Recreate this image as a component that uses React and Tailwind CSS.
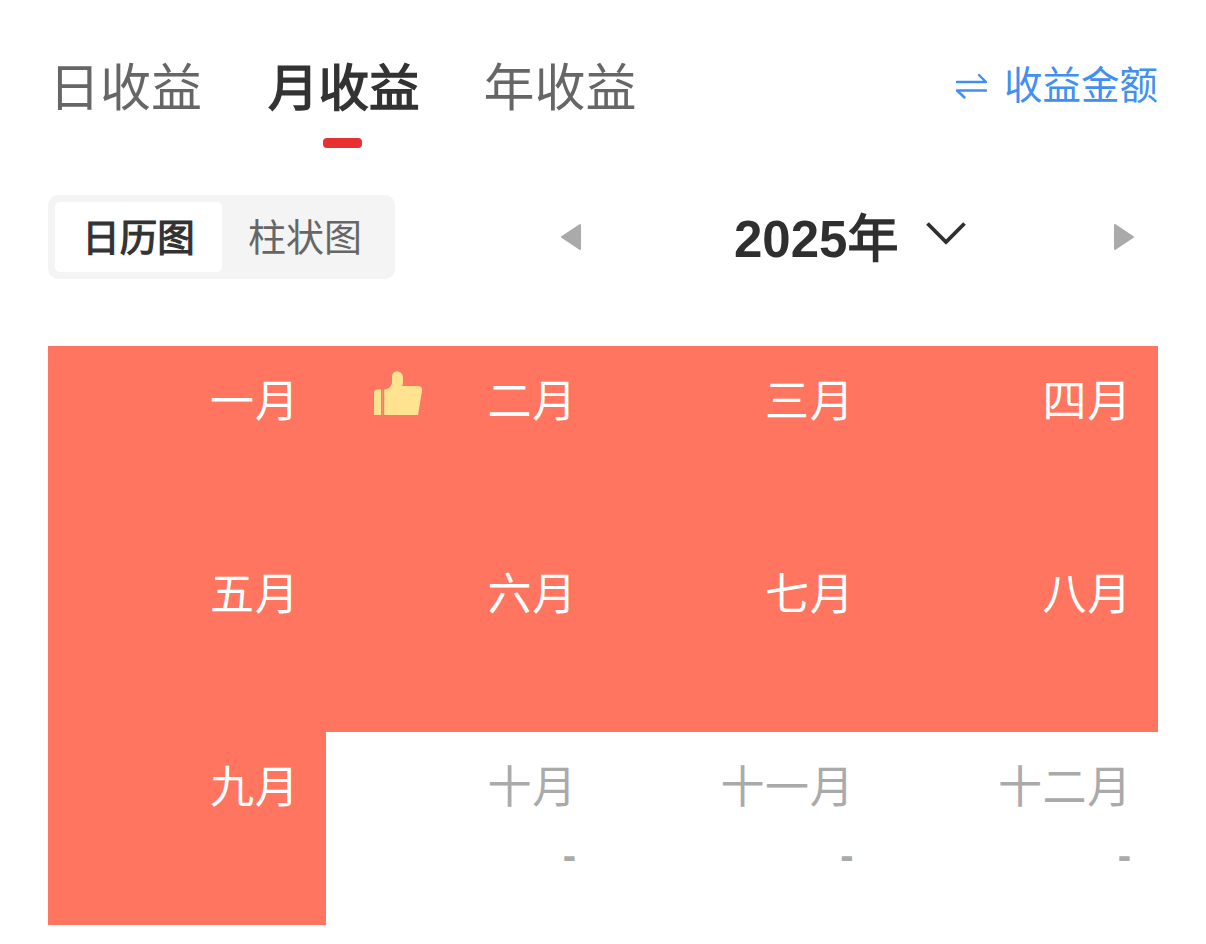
import { useState } from "react";

const tabs = [
  { id: "day", label: "日收益", spacing: "ml-[1px]" },
  { id: "month", label: "月收益", spacing: "ml-[66px]" },
  { id: "year", label: "年收益", spacing: "ml-[64px]" },
];

const months = [
  { label: "一月", filled: true },
  { label: "二月", filled: true, best: true },
  { label: "三月", filled: true },
  { label: "四月", filled: true },
  { label: "五月", filled: true },
  { label: "六月", filled: true },
  { label: "七月", filled: true },
  { label: "八月", filled: true },
  { label: "九月", filled: true },
  { label: "十月", value: "-" },
  { label: "十一月", value: "-" },
  { label: "十二月", value: "-" },
];

function SwapIcon() {
  return (
    <svg width="34" height="30" viewBox="0 0 34 30" fill="none" stroke="#418ff0" strokeWidth="2.4" strokeLinecap="round" strokeLinejoin="round">
      <path d="M2 11H31L24 4" />
      <path d="M31 19.5H2L9.5 26.5" />
    </svg>
  );
}

function ThumbIcon() {
  return (
    <svg width="48" height="44" viewBox="0 0 48 44" fill="#ffe391">
      <path d="M0 44V22Q0 18.5 4 18.5H7V44Z" />
      <path d="M8 18.5H9V44H8Z" opacity=".3" />
      <path d="M10.2 44V18.5C15 18 18 15 18 11V6C18 2.5 20 .5 23 .5C26.5 .5 29 3 29 7V12Q29 14.5 27.5 15H44Q48.5 15 48 20L44 44Z" />
    </svg>
  );
}

function Triangle({ className = "" }) {
  return (
    <svg width="22" height="28" viewBox="0 0 22 28" fill="#aaa" stroke="#aaa" strokeWidth="2" strokeLinejoin="round" className={className}>
      <path d="M2 14L20 2V26Z" />
    </svg>
  );
}

function MonthCell({ label, value, filled, best }) {
  return (
    <div className={`relative flex flex-col items-end pr-[26px] pt-[23px] ${filled ? "bg-[#ff755f] text-white" : "text-[#aaa]"}`}>
      {best && (
        <div className="absolute left-[48.5px] top-[25px]">
          <ThumbIcon />
        </div>
      )}
      <span className="text-[44px] leading-[66px] tracking-[0.7px]">{label}</span>
      {value && <span className="mr-[1px] mt-[10px] text-[40px] font-bold leading-[48px]">{value}</span>}
    </div>
  );
}

export default function App() {
  const [tab, setTab] = useState("month");
  const [view, setView] = useState("calendar");

  return (
    <div className="h-[944px] w-[1206px] overflow-hidden bg-white px-12 pt-[51px] font-['Liberation_Sans','Noto_Sans_CJK_SC',sans-serif]">
      <div className="flex h-[97px] items-start justify-between">
        <div className="flex">
          {tabs.map(({ id, label, spacing }) => (
            <button
              key={id}
              onClick={() => setTab(id)}
              className={`flex flex-col items-center leading-[76px] ${spacing} ${tab === id ? "text-[50.5px] text-[#333] [-webkit-text-stroke:1.6px_#333]" : "text-[51px] text-[#666]"}`}
            >
              {label}
              {tab === id && <span className="mr-[3px] mt-[11px] h-[10px] w-[39px] rounded-[4px] bg-[#e93030]" />}
            </button>
          ))}
        </div>
        <button className="flex items-center gap-[15px] pt-[7px] text-[38.5px] leading-[56px] text-[#418ff0]">
          <SwapIcon />
          收益金额
        </button>
      </div>

      <div className="mt-[47px] flex h-[84px] items-center">
        <div className="flex h-full w-[347px] rounded-[10px] bg-[#f4f4f4] p-[7px] text-[38px] leading-[72px]">
          <button
            onClick={() => setView("calendar")}
            className={`w-[167px] rounded-[5px] ${view === "calendar" ? "bg-white text-[37.5px] text-[#333] [-webkit-text-stroke:1.2px_#333]" : "text-[#666]"}`}
          >
            日历图
          </button>
          <button
            onClick={() => setView("bar")}
            className={`w-[166px] rounded-[5px] ${view === "bar" ? "bg-white text-[37.5px] text-[#333] [-webkit-text-stroke:1.2px_#333]" : "text-[#666]"}`}
          >
            柱状图
          </button>
        </div>
        <button aria-label="上一年" className="ml-[165px]">
          <Triangle />
        </button>
        <button className="ml-[152px] flex items-center text-[51px] leading-[76px] text-[#2f2f2f]">
          <span className="pt-[6px] font-bold">2025</span>
          <span className="pt-[6px] [-webkit-text-stroke:1.6px_#2f2f2f]">年</span>
          <svg width="42" height="26" viewBox="0 0 42 26" fill="none" stroke="#2f2f2f" strokeWidth="3.8" className="mb-2 ml-[27px]">
            <path d="M2.5 3.5L21 22L39.5 3.5" />
          </svg>
        </button>
        <button aria-label="下一年" className="ml-auto mr-[23px]">
          <Triangle className="rotate-180" />
        </button>
      </div>

      <div className="mt-[67px] grid grid-cols-4 auto-rows-[193px]">
        {months.map((month) => (
          <MonthCell key={month.label} {...month} />
        ))}
      </div>
    </div>
  );
}
